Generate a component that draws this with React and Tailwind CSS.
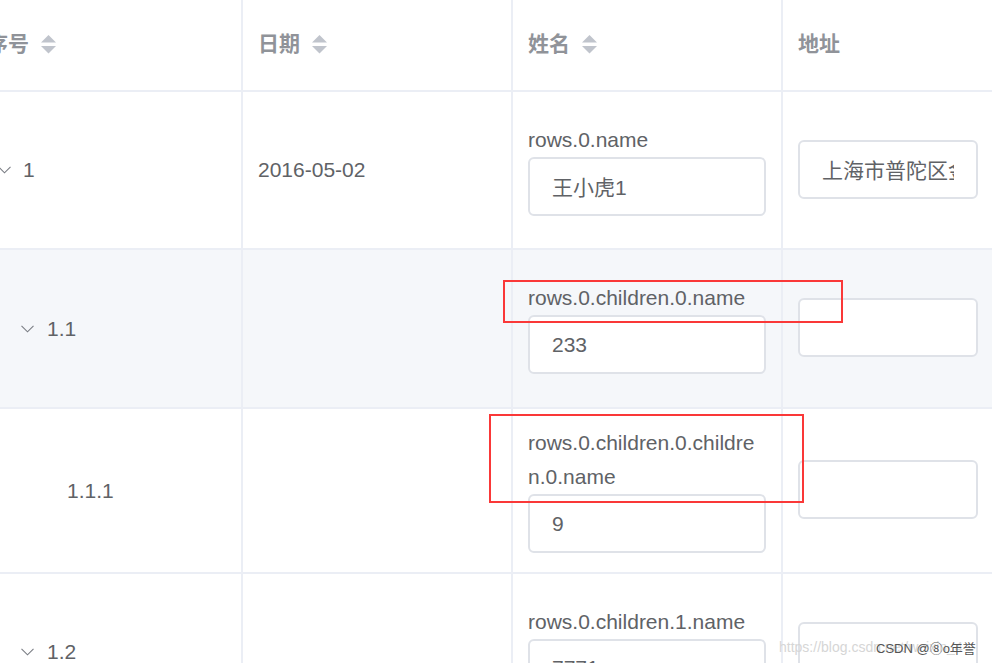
import React from "react";

const FONT = { fontFamily: '"Liberation Sans", "Noto Sans CJK SC", sans-serif' };

function SortIcon() {
  return (
    <svg width="15" height="19" viewBox="0 0 15 19" className="shrink-0">
      <polygon points="7.5,0 15,7.5 0,7.5" fill="#c0c4cc" />
      <polygon points="0,11 15,11 7.5,18.5" fill="#c0c4cc" />
    </svg>
  );
}

function Chevron() {
  return (
    <svg width="13" height="8" viewBox="0 0 13 8" className="shrink-0">
      <polyline points="0.5,0.8 6.5,6.8 12.5,0.8" fill="none" stroke="#7a7d84" strokeWidth="1.1" />
    </svg>
  );
}

function Input({ value, width }) {
  return (
    <input
      readOnly
      defaultValue={value}
      className={`h-[59px] ${width} shrink-0 rounded-[6px] border-2 border-[#dfe2e8] bg-white px-[22px] text-[21px] text-[#606266] outline-none`}
      style={FONT}
    />
  );
}

function NameCell({ label, value }) {
  return (
    <div className="flex flex-col justify-center border-r-2 border-[#ebeef5] px-[15px] pb-[2px]">
      <div className="text-[21px] leading-[34px] text-[#606266]">{label}</div>
      <Input value={value} width="w-[238px]" />
    </div>
  );
}

function Row({ height, bg, first, date, label, value, addr }) {
  return (
    <div
      className={`grid grid-cols-[243px_270px_270px_1fr] border-b-2 border-[#ebeef5] ${bg} ${height}`}
    >
      <div className="flex items-center overflow-hidden border-r-2 border-[#ebeef5] text-[21px] text-[#606266]">
        {first}
      </div>
      <div className="flex items-center border-r-2 border-[#ebeef5] px-[15px] text-[21px] text-[#606266]">
        {date}
      </div>
      <NameCell label={label} value={value} />
      <div className="flex items-center px-[15px] pb-[2px]">
        <Input value={addr} width="w-[180px]" />
      </div>
    </div>
  );
}

export default function App() {
  return (
    <div className="relative h-[663px] w-[992px] overflow-hidden bg-white" style={FONT}>
      {/* header */}
      <div className="grid h-[92px] grid-cols-[243px_270px_270px_1fr] border-b-2 border-[#ebeef5] text-[21px] font-bold text-[#909399]">
        <div className="flex items-center overflow-hidden border-r-2 border-[#ebeef5] pb-[2px]">
          <span className="ml-[-13px] whitespace-nowrap">序号</span>
          <span className="ml-[12px] flex"><SortIcon /></span>
        </div>
        <div className="flex items-center border-r-2 border-[#ebeef5] px-[15px] pb-[2px]">
          <span>日期</span>
          <span className="ml-[12px] flex"><SortIcon /></span>
        </div>
        <div className="flex items-center border-r-2 border-[#ebeef5] px-[15px] pb-[2px]">
          <span>姓名</span>
          <span className="ml-[12px] flex"><SortIcon /></span>
        </div>
        <div className="flex items-center px-[15px] pb-[2px]">
          <span>地址</span>
        </div>
      </div>

      <Row
        height="h-[158px]"
        bg="bg-white"
        first={
          <div className="ml-[-2px] flex items-center gap-[12px]">
            <Chevron />
            <span>1</span>
          </div>
        }
        date="2016-05-02"
        label="rows.0.name"
        value="王小虎1"
        addr="上海市普陀区金沙江路 1518 弄"
      />
      <Row
        height="h-[159px]"
        bg="bg-[#f5f7fa]"
        first={
          <div className="ml-[21px] flex items-center gap-[13px]">
            <Chevron />
            <span>1.1</span>
          </div>
        }
        date=""
        label="rows.0.children.0.name"
        value="233"
        addr=""
      />
      <Row
        height="h-[165px]"
        bg="bg-white"
        first={<span className="ml-[67px]">1.1.1</span>}
        date=""
        label={
          <>
            rows.0.children.0.childre
            <br />
            n.0.name
          </>
        }
        value="9"
        addr=""
      />
      <Row
        height="h-[158px]"
        bg="bg-white"
        first={
          <div className="ml-[21px] flex items-center gap-[13px]">
            <Chevron />
            <span>1.2</span>
          </div>
        }
        date=""
        label="rows.0.children.1.name"
        value="7771"
        addr=""
      />

      {/* annotation boxes */}
      <div className="pointer-events-none absolute left-[503px] top-[280px] h-[43px] w-[340px] border-2 border-[#fa3838]" />
      <div className="pointer-events-none absolute left-[489px] top-[414px] h-[89px] w-[315px] border-2 border-[#fa3838]" />

      {/* watermark */}
      <div className="pointer-events-none absolute left-[779px] top-[637px] whitespace-nowrap text-[14px] text-[#d6d6d6]">
        https://blog.csdn.net/weixin_4
      </div>
      <div className="pointer-events-none absolute left-[876px] top-[639px] whitespace-nowrap text-[13px] text-[#555]">
        CSDN @⑧o年誉
      </div>
    </div>
  );
}
